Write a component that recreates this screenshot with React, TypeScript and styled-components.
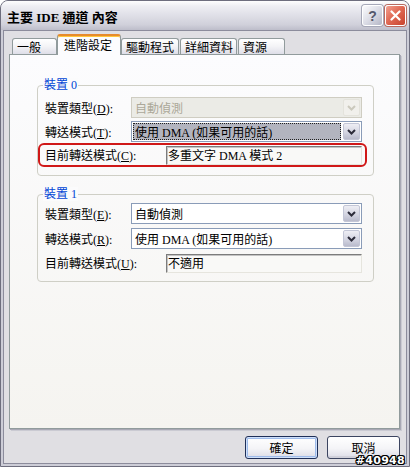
import React from "react";
import styled, { createGlobalStyle } from "styled-components";

const FONT = `"Liberation Serif", "Noto Sans CJK TC", serif`;

const Global = createGlobalStyle`
  html, body { margin: 0; padding: 0; background: #ffffff; }
  body { width: 410px; height: 467px; overflow: hidden; }
  * { box-sizing: border-box; }
`;

const Window = styled.div`
  position: relative;
  width: 410px;
  height: 467px;
  border: 1px solid #6e6e7e;
  border-radius: 8px 8px 0 0;
  background: #cdcdd7;
  display: flex;
  flex-direction: column;
  font-family: ${FONT};
  font-size: 12px;
  color: #000;
`;

const TitleBar = styled.div`
  flex: none;
  height: 29px;
  display: flex;
  align-items: center;
  padding: 0 3px 0 6px;
  border-radius: 7px 7px 0 0;
  background: linear-gradient(#fefefe 0%, #eeeef3 18%, #dfdfe7 50%, #d0d0da 82%, #bdbdca 100%);
`;

const Title = styled.span`
  font-family: ${FONT};
  font-weight: bold;
  font-size: 13px;
  white-space: pre;
  margin-top: 1px;
`;

const CapBtn = styled.div<{ $close?: boolean }>`
  width: 21px;
  height: 21px;
  margin-left: ${(p) => (p.$close ? "2px" : "auto")};
  border: 1px solid #ffffff;
  border-radius: 3px;
  display: flex;
  align-items: center;
  justify-content: center;
  background: ${(p) =>
    p.$close
      ? "linear-gradient(135deg, #f2a090 0%, #e06a55 45%, #c8422d 100%)"
      : "linear-gradient(135deg, #fbfbfd 0%, #dcdde6 50%, #b4b6c6 100%)"};
  box-shadow: 0 0 0 1px ${(p) => (p.$close ? "#b86a60" : "#a6a8b8")};
  font-family: "Liberation Sans", sans-serif;
  font-weight: bold;
  font-size: 14px;
  color: #55596c;
`;

const Client = styled.div`
  flex: 1;
  margin: 0 2px 2px;
  border: 1px solid #8c8c9c;
  background: #e0dfe3;
  display: flex;
  flex-direction: column;
  padding: 3px 6px 4px 5px;
`;

const TabRow = styled.div`
  flex: none;
  display: flex;
  align-items: flex-end;
  height: 21px;
  padding-left: 3px;
  margin-bottom: -1px;
  position: relative;
  z-index: 1;
`;

const Tab = styled.div<{ $w: number; $ml?: number; $active?: boolean }>`
  width: ${(p) => p.$w}px;
  margin-left: ${(p) => p.$ml ?? 0}px;
  height: ${(p) => (p.$active ? 21 : 16)}px;
  margin-bottom: ${(p) => (p.$active ? 0 : 1)}px;
  padding-left: ${(p) => (p.$active ? 6 : 4)}px;
  padding-bottom: ${(p) => (p.$active ? 2 : 0)}px;
  display: flex;
  align-items: center;
  white-space: nowrap;
  border: 1px solid #919b9c;
  border-bottom: none;
  border-top: ${(p) => (p.$active ? "2px solid #e68b2c" : "1px solid #919b9c")};
  border-radius: 3px 3px 0 0;
  background: ${(p) =>
    p.$active ? "#fcfcfe" : "linear-gradient(#ffffff 0%, #f3f3f6 50%, #dedee8 100%)"};
  box-shadow: ${(p) => (p.$active ? "inset 0 1px 0 #ffc73c" : "none")};
`;

const Panel = styled.div`
  flex: 1;
  border: 1px solid #919b9c;
  background: linear-gradient(#fcfcfe, #f5f4f0);
  box-shadow: 1px 1px 0 #a8a8b4, 2px 2px 0 #cacad2;
  padding: 30px 25px 0 27px;
  display: flex;
  flex-direction: column;
`;

const Group = styled.div<{ $mt: number; $pt: number; $pb: number }>`
  position: relative;
  margin-top: ${(p) => p.$mt}px;
  border: 1px solid #cfcfc6;
  border-radius: 4px;
  padding: ${(p) => p.$pt}px 11px ${(p) => p.$pb}px 7px;
  display: flex;
  flex-direction: column;
`;

const Legend = styled.span`
  position: absolute;
  top: -8px;
  left: 5px;
  padding: 0 1px;
  line-height: 14px;
  background: #fbfbfc;
  color: #0046d5;
`;

const Row = styled.div<{ $h: number; $mt?: number }>`
  display: flex;
  align-items: center;
  height: ${(p) => p.$h}px;
  margin-top: ${(p) => p.$mt ?? 0}px;
`;

const Highlight = styled.div`
  display: flex;
  align-items: center;
  height: 24px;
  margin: 1px -5px 0 -7px;
  padding: 0 3px 0 5px;
  border: 2px solid #d01818;
  border-radius: 6px;
`;

const Label = styled.span<{ $w: number }>`
  flex: none;
  width: ${(p) => p.$w}px;
  white-space: nowrap;
`;

const Combo = styled.div<{ $disabled?: boolean }>`
  flex: 1;
  height: 21px;
  display: flex;
  padding: 1px;
  border: 1px solid ${(p) => (p.$disabled ? "#cfcdc2" : "#8a9cb8")};
  background: ${(p) => (p.$disabled ? "#ebebe6" : "#ffffff")};
`;

const ComboText = styled.div<{ $focus?: boolean; $disabled?: boolean }>`
  flex: 1;
  display: flex;
  align-items: center;
  padding-left: 2px;
  margin-right: 2px;
  white-space: nowrap;
  color: ${(p) => (p.$disabled ? "#aca899" : "#000")};
  background: ${(p) => (p.$focus ? "#b2b4bf" : "transparent")};
  outline: ${(p) => (p.$focus ? "1px dotted #202020" : "none")};
  outline-offset: -1px;
`;

const DropBtn = styled.div<{ $disabled?: boolean }>`
  flex: none;
  width: 17px;
  display: flex;
  align-items: center;
  justify-content: center;
  border: 1px solid ${(p) => (p.$disabled ? "#e4e3dc" : "#c3c6d6")};
  border-radius: 2px;
  background: ${(p) =>
    p.$disabled ? "#f1f0ec" : "linear-gradient(#eeeef4 0%, #d2d3e0 60%, #b9bbcc 100%)"};
  color: ${(p) => (p.$disabled ? "#cbc9bd" : "#2c2c3a")};
`;

const Edit = styled.div`
  flex: 1;
  height: 19px;
  display: flex;
  align-items: center;
  padding-left: 1px;
  white-space: nowrap;
  border: 1px solid;
  border-color: #7c7c7c #e6e5de #e6e5de #7c7c7c;
  box-shadow: inset 1px 1px 0 #c4c4c4;
  background: #f9f9f7;
`;

const ButtonRow = styled.div`
  flex: none;
  display: flex;
  justify-content: flex-end;
  gap: 9px;
  margin-top: 7px;
`;

const Btn = styled.button<{ $default?: boolean }>`
  width: 73px;
  height: 23px;
  padding: 0;
  font-family: ${FONT};
  font-size: 12px;
  color: #000;
  border: 1px solid ${(p) => (p.$default ? "#1f2f58" : "#3c4560")};
  border-radius: 3px;
  background: linear-gradient(#ffffff 0%, #f4f4f7 55%, #dcdce6 100%);
  box-shadow: ${(p) =>
    p.$default ? "inset 0 0 0 1px #cfe0fa, inset 0 0 0 2px #9fbbea" : "inset 0 -2px 0 #d0d0da"};
`;

const Watermark = styled.span`
  position: absolute;
  right: 4px;
  bottom: -1px;
  font-family: "DejaVu Sans", sans-serif;
  font-weight: bold;
  font-size: 11px;
  letter-spacing: 0.3px;
  color: #ffffff;
  text-shadow: 1px 0 #000, -1px 0 #000, 0 1px #000, 0 -1px #000, 1px 1px #000, -1px -1px #000,
    1px -1px #000, -1px 1px #000;
`;

const Chevron = () => (
  <svg width="9" height="6" viewBox="0 0 9 6">
    <polyline points="1,1 4.5,4.5 8,1" fill="none" stroke="currentColor" strokeWidth="2" />
  </svg>
);

const CloseX = () => (
  <svg width="11" height="11" viewBox="0 0 11 11">
    <path d="M1.5 1.5 L9.5 9.5 M9.5 1.5 L1.5 9.5" stroke="#ffffff" strokeWidth="2.2" strokeLinecap="round" />
  </svg>
);

type ComboProps = { text: string; disabled?: boolean; focus?: boolean };
const ComboBox = ({ text, disabled, focus }: ComboProps) => (
  <Combo $disabled={disabled}>
    <ComboText $disabled={disabled} $focus={focus}>
      {text}
    </ComboText>
    <DropBtn $disabled={disabled}>
      <Chevron />
    </DropBtn>
  </Combo>
);

const Acc = ({ name, k }: { name: string; k: string }) => (
  <>
    {name}(<u>{k}</u>):
  </>
);

export default function App() {
  return (
    <>
      <Global />
      <Window>
        <TitleBar>
          <Title>主要 IDE 通道 內容</Title>
          <CapBtn>?</CapBtn>
          <CapBtn $close>
            <CloseX />
          </CapBtn>
        </TitleBar>
        <Client>
          <TabRow>
            <Tab $w={45}>一般</Tab>
            <Tab $w={64} $active>
              進階設定
            </Tab>
            <Tab $w={58}>驅動程式</Tab>
            <Tab $w={57} $ml={1}>
              詳細資料
            </Tab>
            <Tab $w={47} $ml={1}>
              資源
            </Tab>
          </TabRow>
          <Panel>
            <Group $mt={0} $pt={11} $pb={8}>
              <Legend>裝置 0</Legend>
              <Row $h={21}>
                <Label $w={86}>
                  <Acc name="裝置類型" k="D" />
                </Label>
                <ComboBox text="自動偵測" disabled />
              </Row>
              <Row $h={21} $mt={3}>
                <Label $w={86}>
                  <Acc name="轉送模式" k="T" />
                </Label>
                <ComboBox text="使用 DMA (如果可用的話)" focus />
              </Row>
              <Highlight>
                <Label $w={121}>
                  <Acc name="目前轉送模式" k="C" />
                </Label>
                <Edit>多重文字 DMA 模式 2</Edit>
              </Highlight>
            </Group>
            <Group $mt={18} $pt={8} $pb={8}>
              <Legend>裝置 1</Legend>
              <Row $h={21}>
                <Label $w={86}>
                  <Acc name="裝置類型" k="E" />
                </Label>
                <ComboBox text="自動偵測" />
              </Row>
              <Row $h={21} $mt={4}>
                <Label $w={86}>
                  <Acc name="轉送模式" k="R" />
                </Label>
                <ComboBox text="使用 DMA (如果可用的話)" />
              </Row>
              <Row $h={20} $mt={4}>
                <Label $w={121}>
                  <Acc name="目前轉送模式" k="U" />
                </Label>
                <Edit>不適用</Edit>
              </Row>
            </Group>
          </Panel>
          <ButtonRow>
            <Btn $default>確定</Btn>
            <Btn>取消</Btn>
          </ButtonRow>
        </Client>
        <Watermark>#40948</Watermark>
      </Window>
    </>
  );
}
